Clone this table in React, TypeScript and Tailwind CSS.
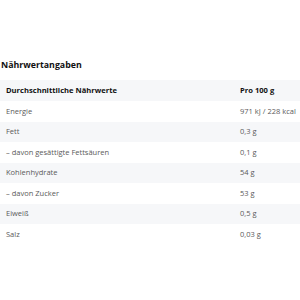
import React from "react";

const rows: [string, string][] = [
  ["Energie", "971 kJ / 228 kcal"],
  ["Fett", "0,3 g"],
  ["– davon gesättigte Fettsäuren", "0,1 g"],
  ["Kohlenhydrate", "54 g"],
  ["– davon Zucker", "53 g"],
  ["Eiweiß", "0,5 g"],
  ["Salz", "0,03 g"],
];

export default function App() {
  return (
    <div
      className="w-[300px] h-[300px] bg-white pt-[59px]"
      style={{ fontFamily: '"Open Sans", "DejaVu Sans", sans-serif' }}
    >
      <div className="pl-[1px] text-[8.8px] leading-[12px] font-bold text-[#111]">Nährwertangaben</div>
      <div className="mt-[9px]">
        <div className="flex h-[21px] items-center bg-[#f6f7f9] text-[7.6px] font-bold text-[#111]">
          <div className="pl-[6px] w-[240px]">Durchschnittliche Nährwerte</div>
          <div>Pro 100 g</div>
        </div>
        {rows.map(([a, b], i) => (
          <div
            key={a}
            className={`flex h-[20.5px] items-center text-[7.5px] text-[#5a5a5a] ${i % 2 === 1 ? "bg-[#f6f7f9]" : "bg-white"}`}
          >
            <div className="pl-[6px] w-[240px]">{a}</div>
            <div>{b}</div>
          </div>
        ))}
      </div>
    </div>
  );
}
